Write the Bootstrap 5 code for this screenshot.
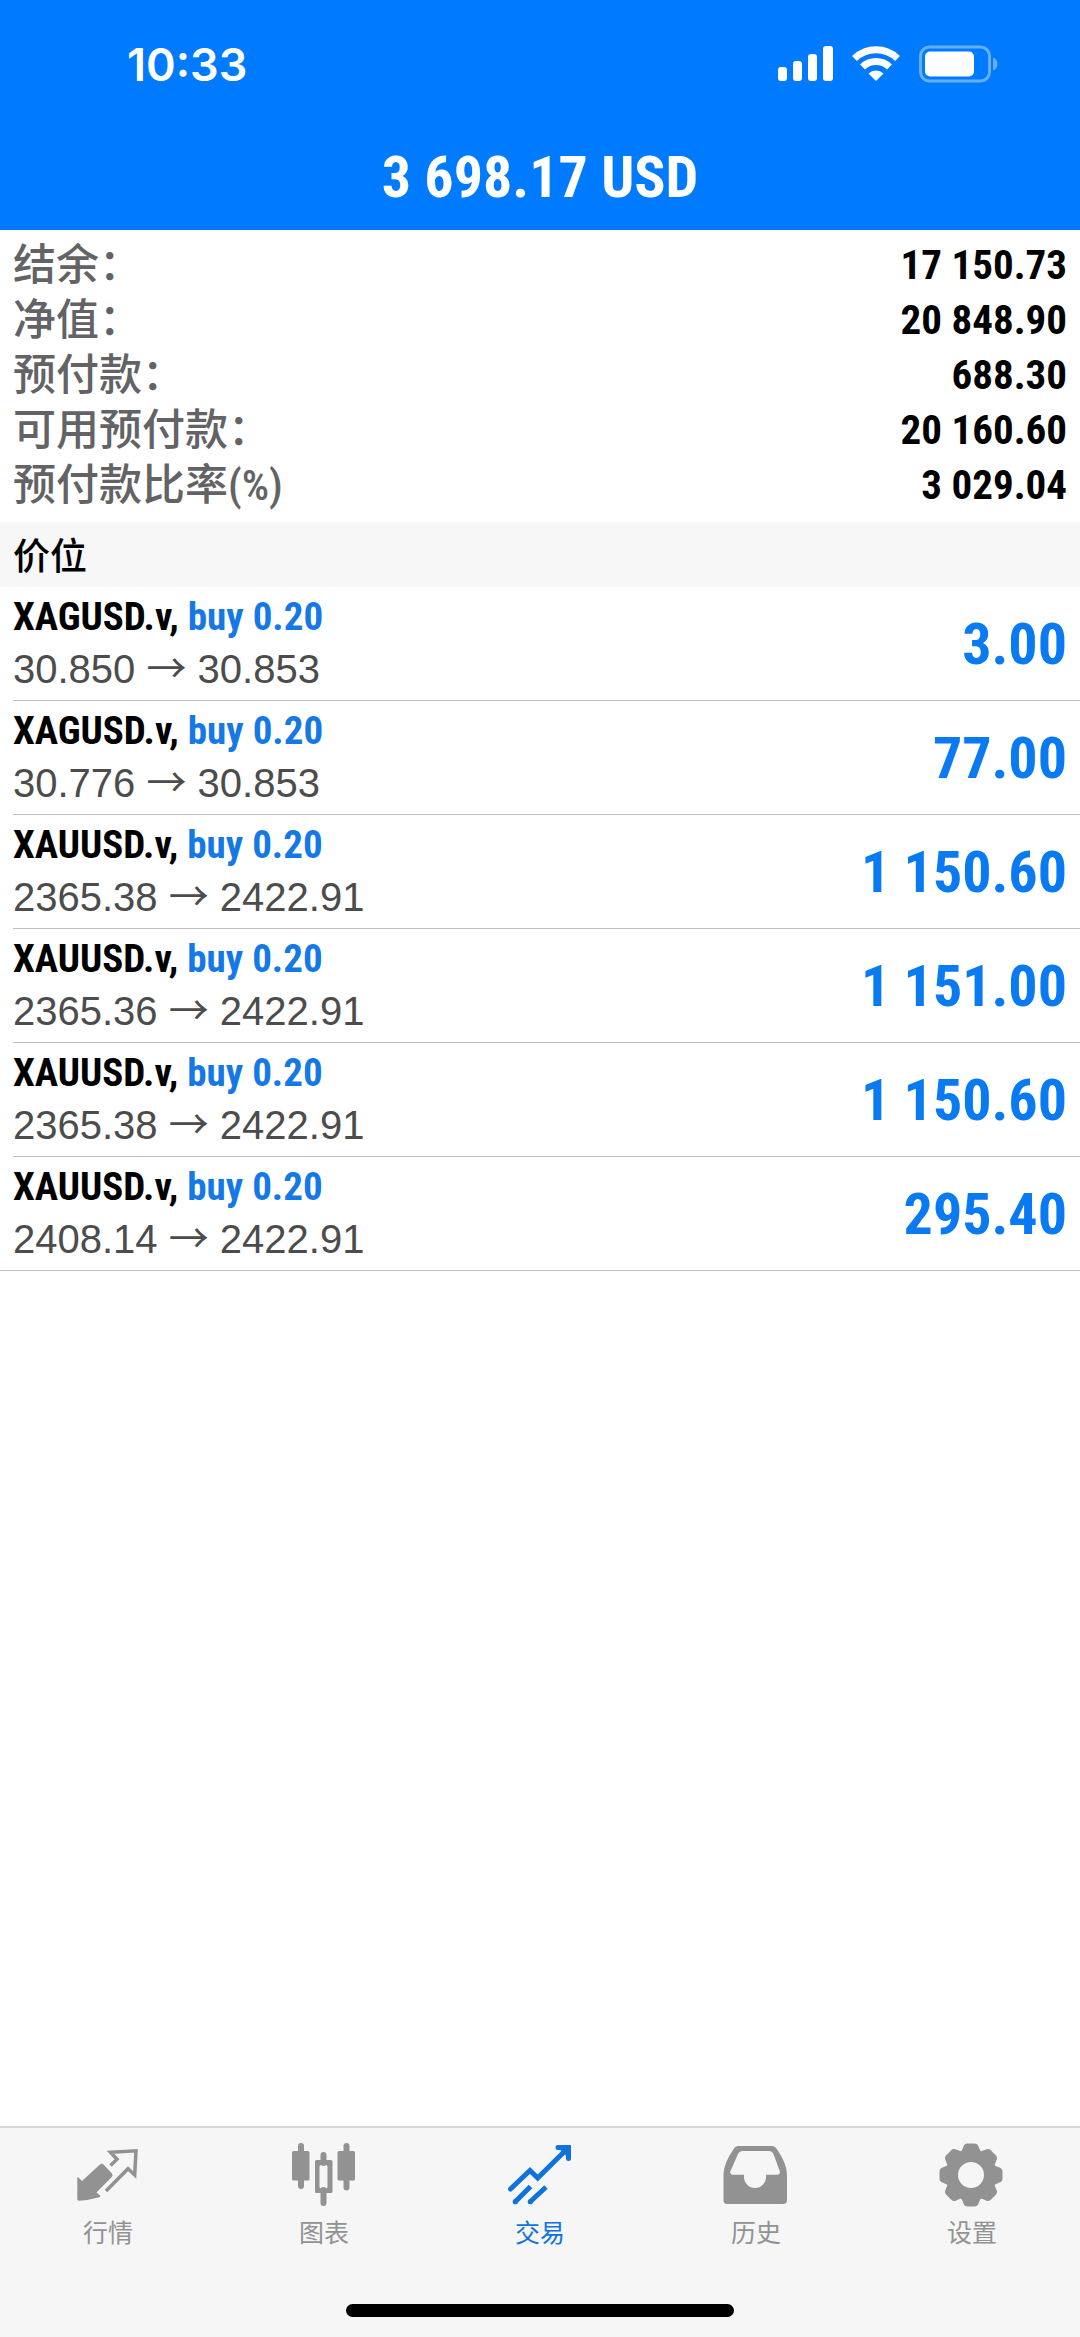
<!DOCTYPE html>
<html lang="zh-CN">
<head>
<meta charset="utf-8">
<meta name="viewport" content="width=device-width, initial-scale=1">
<title>交易</title>
<link href="https://cdn.jsdelivr.net/npm/bootstrap@5.3.0/dist/css/bootstrap.min.css" rel="stylesheet">
<style>
  :root {
    --brand: #007aff;
    --profit: #0a7af2;
    --condensed: "Roboto Condensed", Roboto, "Noto Sans CJK SC", sans-serif;
    --cjk: "Noto Sans CJK SC", sans-serif;
  }
  body { font-family: "Liberation Sans", "Noto Sans CJK SC", sans-serif; color: #000; background: #fff; }
  .app-head { background: var(--brand); color: #fff; }
  .status { height: 128px; padding: 0 80px 0 127px; }
  .clock { font: 600 45px/1 Inter, sans-serif; }
  .total { font: 700 58px/98px var(--condensed); }
  .summary { padding: 8px 13px 9px; }
  .summary dt { font: 500 43px/55px var(--condensed); color: #636366; }
  .summary dd { font: 700 41px/55px var(--condensed); }
  .section-title { font: 500 37px/65px var(--cjk); background: #f7f7f7; padding: 0 13px; }
  .position { margin-left: 13px; padding-right: 13px; height: 114px; border-bottom: 1px solid #bebec0; }
  .position:last-child { margin-left: 0; padding-left: 13px; }
  .symbol { font: 700 39px/50px var(--condensed); }
  .side { color: #1478e6; }
  .prices { font-size: 40px; line-height: 54px; color: #4c4c4c; }
  .arrow { font-family: "Noto Sans CJK SC", sans-serif; font-weight: 400; line-height: 1; }
  .profit { font: 700 58px/1 var(--condensed); color: var(--profit); }
  .tabs { background: #f6f6f6; border-top: 2px solid #d8d8d8; }
  .tab { color: #929292; font: 400 25px/34px var(--cjk); padding-top: 15px; }
  .tab.active { color: #0f72dd; }
  .tab svg { width: 64px; height: 64px; margin-bottom: 7px; overflow: visible; }
  .home-bar { width: 36%; height: 13px; background: #000; margin: 56px auto 20px; }
</style>
</head>
<body>
<div class="d-flex flex-column min-vh-100">
  <header class="app-head pb-1">
    <div class="status d-flex align-items-center justify-content-between">
      <span class="clock">10:33</span>
      <svg width="222" height="38" viewBox="0 0 222 38" fill="#fff" role="img" aria-label="信号 Wi-Fi 电量">
        <rect x="0" y="22" width="9" height="14" rx="3"/>
        <rect x="15" y="16" width="9" height="20" rx="3"/>
        <rect x="30" y="9" width="9" height="27" rx="3"/>
        <rect x="45" y="1" width="10" height="35" rx="3"/>
        <g fill="none" stroke="#fff" stroke-width="7">
          <path d="M76.500 13.500a31 31 0 0 1 43 0"/>
          <path d="M84.500 22a19.500 19.500 0 0 1 27 0"/>
        </g>
        <path d="M90.500 28.500a11 11 0 0 1 15 0L98 36Z"/>
        <rect x="142.500" y="2" width="69" height="34" rx="9" fill="none" stroke="#66afff" stroke-width="3"/>
        <rect x="147" y="6.500" width="49" height="25" rx="5"/>
        <path d="M215 12.500c6 2 6 11 0 13Z" fill="#66afff"/>
      </svg>
    </div>
    <h1 class="total text-center m-0">3 698.17 USD</h1>
  </header>

  <main class="flex-grow-1">
    <dl class="summary m-0">
      <div class="d-flex justify-content-between"><dt>结余：</dt><dd class="m-0">17 150.73</dd></div>
      <div class="d-flex justify-content-between"><dt>净值：</dt><dd class="m-0">20 848.90</dd></div>
      <div class="d-flex justify-content-between"><dt>预付款：</dt><dd class="m-0">688.30</dd></div>
      <div class="d-flex justify-content-between"><dt>可用预付款：</dt><dd class="m-0">20 160.60</dd></div>
      <div class="d-flex justify-content-between"><dt>预付款比率(%)</dt><dd class="m-0">3 029.04</dd></div>
    </dl>
    <h2 class="section-title m-0">价位</h2>
    <ul class="list-unstyled m-0">
      <li class="position d-flex align-items-center justify-content-between">
        <div><div class="symbol">XAGUSD.v, <span class="side">buy 0.20</span></div><div class="prices">30.850 <span class="arrow">→</span> 30.853</div></div>
        <div class="profit">3.00</div>
      </li>
      <li class="position d-flex align-items-center justify-content-between">
        <div><div class="symbol">XAGUSD.v, <span class="side">buy 0.20</span></div><div class="prices">30.776 <span class="arrow">→</span> 30.853</div></div>
        <div class="profit">77.00</div>
      </li>
      <li class="position d-flex align-items-center justify-content-between">
        <div><div class="symbol">XAUUSD.v, <span class="side">buy 0.20</span></div><div class="prices">2365.38 <span class="arrow">→</span> 2422.91</div></div>
        <div class="profit">1 150.60</div>
      </li>
      <li class="position d-flex align-items-center justify-content-between">
        <div><div class="symbol">XAUUSD.v, <span class="side">buy 0.20</span></div><div class="prices">2365.36 <span class="arrow">→</span> 2422.91</div></div>
        <div class="profit">1 151.00</div>
      </li>
      <li class="position d-flex align-items-center justify-content-between">
        <div><div class="symbol">XAUUSD.v, <span class="side">buy 0.20</span></div><div class="prices">2365.38 <span class="arrow">→</span> 2422.91</div></div>
        <div class="profit">1 150.60</div>
      </li>
      <li class="position d-flex align-items-center justify-content-between">
        <div><div class="symbol">XAUUSD.v, <span class="side">buy 0.20</span></div><div class="prices">2408.14 <span class="arrow">→</span> 2422.91</div></div>
        <div class="profit">295.40</div>
      </li>
    </ul>
  </main>

  <footer class="tabs sticky-bottom">
    <nav class="d-flex">
      <a href="#" class="tab col text-center text-decoration-none">
        <svg viewBox="0 0 64 64" class="d-block mx-auto" aria-hidden="true">
          <path d="M1.300 35Q1.300 33.500 2.500 34.500L6 38 23.700 21.700Q25.700 20 27.700 21.700L36 30.500Q37.300 32.200 36 33.800L20.500 49.500 24 52.500Q25 54 23.300 54.300 13 57.300 3 57.700 1.300 57.700 1.300 56Z" fill="currentColor"/>
          <path d="M34.500 22.500 41 16.200 34.500 9.300 60 7.800 58.700 32 52 25.800 30 48" fill="none" stroke="currentColor" stroke-width="3.500" stroke-linejoin="miter"/>
        </svg>
        行情
      </a>
      <a href="#" class="tab col text-center text-decoration-none">
        <svg viewBox="0 0 64 64" class="d-block mx-auto" fill="currentColor" aria-hidden="true">
          <rect x="6" y="0" width="6" height="46" rx="3"/><rect x="0" y="8" width="17.500" height="29.500" rx="1.500"/>
          <rect x="28.500" y="9" width="6" height="14" rx="3"/><rect x="28.500" y="44" width="6" height="19" rx="3"/>
          <path fill-rule="evenodd" d="M24.500 17H39Q40.500 17 40.500 18.500V48.500Q40.500 50 39 50H24.500Q23 50 23 48.500V18.500Q23 17 24.500 17ZM29 22Q27.500 22 27.500 24V43.500Q27.500 45.500 29 45.500H34Q35.500 45.500 35.500 43.500V24Q35.500 22 34 22Z"/>
          <rect x="51.500" y="0" width="6" height="47.500" rx="3"/><rect x="45.500" y="8" width="17.500" height="29.500" rx="1.500"/>
        </svg>
        图表
      </a>
      <a href="#" class="tab active col text-center text-decoration-none" aria-current="page">
        <svg viewBox="0 0 64 64" class="d-block mx-auto" fill="none" stroke="currentColor" stroke-width="5" aria-hidden="true">
          <path d="M2.500 46 22 27.500 29.700 35 59 6" stroke-linecap="round"/>
          <path d="M50 4.500H60.500V15.500Z" fill="currentColor" stroke="none"/>
          <path d="M50 4.500H60.500V15.500" stroke-linecap="round"/>
          <path d="M7.500 58.500 22.500 43.500M22.500 58.500 38 44"/>
          <g fill="currentColor" stroke="none"><circle cx="7.300" cy="58.700" r="2.600"/><circle cx="22.300" cy="58.700" r="2.600"/></g>
        </svg>
        交易
      </a>
      <a href="#" class="tab col text-center text-decoration-none">
        <svg viewBox="0 0 64 64" class="d-block mx-auto" fill="currentColor" aria-hidden="true">
          <path fill-rule="evenodd" d="M14 3H48Q51 3 52.500 5.500C58 14 63 22 63 33V57Q63 61 59 61H3Q-.5 61-.5 57V33C-.5 22 4.500 14 10 5.500Q11.300 3 14 3ZM19 8Q15.500 8 14 11L6.500 28Q5.500 31.700 8.500 31.700H20V34A11 11 0 0 0 42 34V31.700H53.500Q56.700 31.700 55.700 28L49.500 11Q48 8 45 8Z"/>
        </svg>
        历史
      </a>
      <a href="#" class="tab col text-center text-decoration-none">
        <svg viewBox="0 0 64 64" class="d-block mx-auto" fill="currentColor" aria-hidden="true">
          <defs><path id="tooth" d="M-11-22Q-9-24-7.500-28.500-6.500-31.500-3.500-31.500H3.500Q6.500-31.500 7.500-28.500 9-24 11-22Z"/></defs>
          <g transform="translate(31 32)">
            <circle r="18.500" fill="none" stroke="currentColor" stroke-width="11"/>
            <use href="#tooth"/><use href="#tooth" transform="rotate(45)"/><use href="#tooth" transform="rotate(90)"/><use href="#tooth" transform="rotate(135)"/>
            <use href="#tooth" transform="rotate(180)"/><use href="#tooth" transform="rotate(225)"/><use href="#tooth" transform="rotate(270)"/><use href="#tooth" transform="rotate(315)"/>
          </g>
        </svg>
        设置
      </a>
    </nav>
    <div class="home-bar rounded-pill"></div>
  </footer>
</div>
<script src="https://cdn.jsdelivr.net/npm/bootstrap@5.3.0/dist/js/bootstrap.bundle.min.js"></script>
</body>
</html>
